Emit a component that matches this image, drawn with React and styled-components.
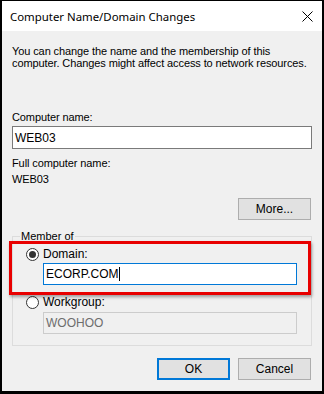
import React from "react";
import styled, { createGlobalStyle } from "styled-components";

const Global = createGlobalStyle`
  html, body {
    margin: 0;
    padding: 0;
    background: #000;
  }
  * {
    box-sizing: border-box;
  }
`;

const Window = styled.div`
  width: 324px;
  height: 394px;
  background: #f0f0f0;
  border-style: solid;
  border-color: #000;
  border-width: 1px 2px 3px 2px;
  display: flex;
  flex-direction: column;
  font-family: "Liberation Sans", Arial, sans-serif;
  font-size: 11px;
  color: #000;
`;

const TitleBar = styled.div`
  height: 30px;
  background: #fff;
  display: flex;
  align-items: center;
  justify-content: space-between;
  padding: 0 9px 0 8px;
`;

const Title = styled.span`
  font-family: "Noto Sans", "Open Sans", sans-serif;
  font-size: 11.4px;
`;

const Body = styled.div`
  padding: 14px 10px 0 10px;
  display: flex;
  flex-direction: column;
`;

const Intro = styled.p`
  margin: 0;
  line-height: 12px;
  white-space: nowrap;
  letter-spacing: -0.1px;
`;

const Label = styled.div`
  margin-top: ${(p) => p.$top || 0}px;
  line-height: ${(p) => p.$lh || 12}px;
  letter-spacing: -0.1px;
`;

const TextBox = styled.div`
  height: ${(p) => p.$h || 22}px;
  margin-top: ${(p) => p.$top || 0}px;
  margin-left: ${(p) => p.$left || 0}px;
  border: 1px solid ${(p) => (p.$focus ? "#0078d7" : p.$disabled ? "#cccccc" : "#7a7a7a")};
  background: ${(p) => (p.$disabled ? "#f0f0f0" : "#fff")};
  color: ${(p) => (p.$disabled ? "#6d6d6d" : "#000")};
  display: flex;
  align-items: center;
  padding-left: 2px;
  font-size: 12px;
`;

const Caret = styled.span`
  display: inline-block;
  width: 1px;
  height: 14px;
  background: #000;
  margin-left: 1px;
`;

const ButtonRow = styled.div`
  display: flex;
  justify-content: flex-end;
  gap: 8px;
  margin-top: ${(p) => p.$top || 0}px;
  padding-right: 1px;
`;

const Button = styled.button`
  width: 73px;
  height: 22px;
  background: #e1e1e1;
  border: ${(p) => (p.$default ? "2px solid #0078d7" : "1px solid #adadad")};
  font-family: "Liberation Sans", Arial, sans-serif;
  font-size: 12px;
  color: #000;
  padding: 0;
`;

const Group = styled.div`
  margin-top: 16px;
  border: 1px solid #dcdcdc;
  padding-bottom: 11px;
  display: flex;
  flex-direction: column;
`;

const Legend = styled.div`
  align-self: flex-start;
  margin: -7px 0 -1px 7px;
  padding: 0 1px;
  line-height: 12px;
  background: #f0f0f0;
`;

const Highlight = styled.div`
  margin-left: -4px;
  border: 3px solid #e80000;
  box-shadow: 1px 2px 3px rgba(0, 0, 0, 0.35);
  padding: 2px 11px 7px 14px;
  position: relative;
`;

const Section = styled.div`
  padding: 0 14px 0 13px;
`;

const RadioRow = styled.div`
  display: flex;
  align-items: center;
  gap: 4px;
  height: ${(p) => p.$h || 16}px;
  font-size: 12px;
`;

const Radio = styled.span`
  width: 13px;
  height: 13px;
  border-radius: 50%;
  border: 1px solid #333;
  background: #fff;
  display: flex;
  align-items: center;
  justify-content: center;
  &::after {
    content: "";
    width: 7px;
    height: 7px;
    border-radius: 50%;
    background: #333;
    display: ${(p) => (p.$checked ? "block" : "none")};
  }
`;

const CloseIcon = () => (
  <svg width="11" height="11" viewBox="0 0 11 11">
    <path d="M0.5 0.5 L10.5 10.5 M10.5 0.5 L0.5 10.5" stroke="#000" strokeWidth="1" />
  </svg>
);

export default function App() {
  return (
    <>
      <Global />
      <Window>
        <TitleBar>
          <Title>Computer Name/Domain Changes</Title>
          <CloseIcon />
        </TitleBar>
        <Body>
          <Intro>
            You can change the name and the membership of this
            <br />
            computer. Changes might affect access to network resources.
          </Intro>
          <Label $top={42}>Computer name:</Label>
          <TextBox $top={3} $h={23}>WEB03</TextBox>
          <Label $top={6} $lh={16}>Full computer name:</Label>
          <Label $lh={16}>WEB03</Label>
          <ButtonRow $top={11}>
            <Button>More...</Button>
          </ButtonRow>
          <Group>
            <Legend>Member of</Legend>
            <Highlight>
              <RadioRow>
                <Radio $checked />
                Domain:
              </RadioRow>
              <TextBox $top={1} $left={17} $focus>
                ECORP.COM
                <Caret />
              </TextBox>
            </Highlight>
            <Section>
              <RadioRow $h={14}>
                <Radio />
                Workgroup:
              </RadioRow>
              <TextBox $top={3} $left={17} $disabled>
                WOOHOO
              </TextBox>
            </Section>
          </Group>
          <ButtonRow $top={12}>
            <Button $default>OK</Button>
            <Button>Cancel</Button>
          </ButtonRow>
        </Body>
      </Window>
    </>
  );
}
